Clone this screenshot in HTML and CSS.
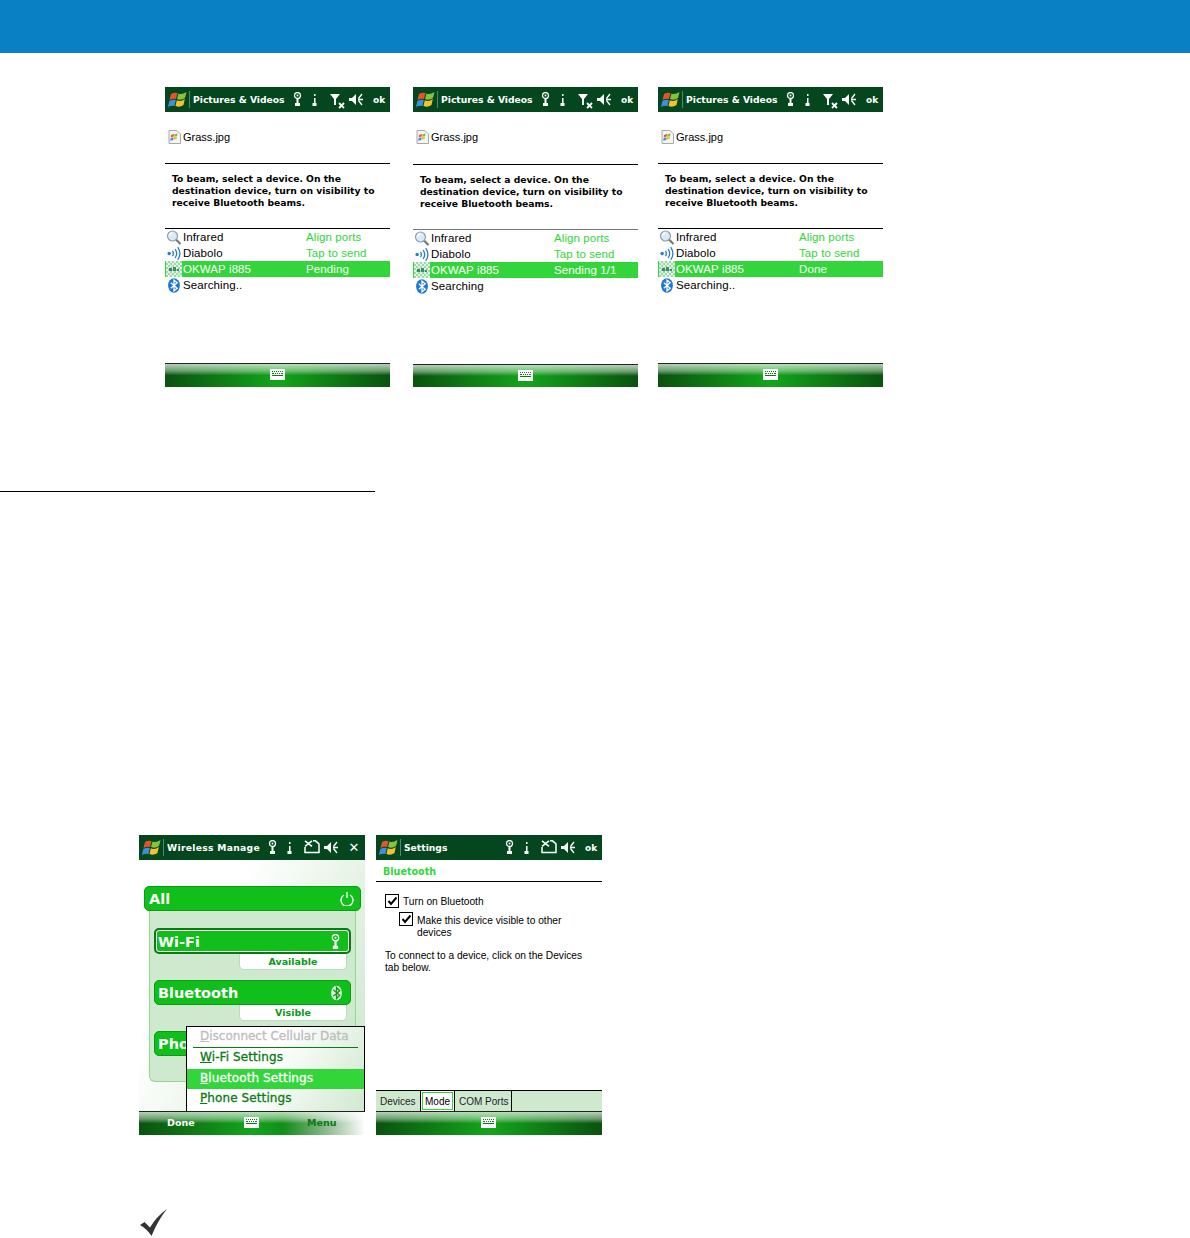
FILE: index.html
```html
<!DOCTYPE html>
<html lang="en">
<head>
<meta charset="utf-8">
<title>Bluetooth beam screens</title>
<link rel="stylesheet" href="styles.css">
</head>
<body>
<svg class="sprite" xmlns="http://www.w3.org/2000/svg">
  <symbol id="flag" viewBox="0 0 19 17">
    <path d="M3 3Q6 1 9.500 2L8 8Q5 7 1.500 9Z" fill="#e8512a"/>
    <path d="M10.500 2.500Q14 4 18.500 1L17 7Q13 10 9 8Z" fill="#86c440"/>
    <path d="M1.300 10Q5 8 7.800 9L6.500 15Q3.500 14 0 16Z" fill="#3d8fe0"/>
    <path d="M8.800 9.300Q13 11 16.800 8L15.500 14Q11.500 17 7.500 15Z" fill="#f5c22e"/>
  </symbol>
  <symbol id="wifi" viewBox="0 0 9 15">
    <circle cx="4.500" cy="3.500" r="3" fill="none" stroke="#fff" stroke-width="1.300"/>
    <path d="M3.500 7h2v4h-2zM2 11h5v3H2z" fill="#fff"/>
    <circle cx="4.500" cy="3.500" r="1" fill="#fff"/>
  </symbol>
  <symbol id="ant" viewBox="0 0 5 15">
    <path d="M2 2h1.500v2H2zM2 6h1.500v5H2zM0.500 11h4v3h-4z" fill="#fff"/>
  </symbol>
  <symbol id="signal" viewBox="0 0 15 16">
    <path d="M0 1h10L6 6v6H4V6Z" fill="#fff"/>
    <path d="M9 10l5 5M14 10l-5 5" stroke="#fff" stroke-width="1.800"/>
  </symbol>
  <symbol id="sync" viewBox="0 0 16 14">
    <path d="M1 7v5.500h14V3.500" fill="none" stroke="#fff" stroke-width="1.500"/>
    <path d="M1 0.800l7 5.500M8 0.800l-7 5.500M9 0.800h2.500l3.500 3" fill="none" stroke="#fff" stroke-width="1.600"/>
  </symbol>
  <symbol id="spk" viewBox="0 0 15 13">
    <path d="M0 5h3l4-4v11L3 8H0Z" fill="#fff"/>
    <path d="M13 1L9.500 5.500M9 6.500h5M13 12L9.500 7.500" stroke="#fff" stroke-width="1.300" fill="none"/>
  </symbol>
  <symbol id="kbd" viewBox="0 0 15 11">
    <path d="M0 0h15v11H0z" fill="#fff"/>
    <path d="M2 2h1v1H2zM4 2h1v1H4zM6 2h1v1H6zM8 2h1v1H8zM10 2h1v1h-1zM12 2h1v1h-1zM2 4h2v1H2zM5 4h1v1H5zM7 4h1v1H7zM9 4h1v1H9zM11 4h2v1h-2zM2 6h11v1H2z" fill="#0a7a12"/>
  </symbol>
  <symbol id="file" viewBox="0 0 13 14">
    <path d="M1 .5h8l3.500 3.500v9.500H1z" fill="#f4f4f4" stroke="#a8a8a8"/>
    <path d="M3 5l3-1-.3 2.500-3 .7z" fill="#e8512a"/>
    <path d="M6.500 4.300l3-.8-.3 2.600-3 .6z" fill="#7fbf3a"/>
    <path d="M2.600 8l3-.8L5.300 10l-3 .7z" fill="#3d8fe0"/>
    <path d="M6 7l3-.7-.3 2.700-3 .8z" fill="#f5c22e"/>
  </symbol>
  <symbol id="mag" viewBox="0 0 15 15">
    <path d="M9.500 9.500l4.500 4.500" stroke="#777" stroke-width="2.200"/>
    <circle cx="6" cy="6" r="5" fill="#dce9f6" stroke="#8a9fb5" stroke-width="1.200"/>
    <path d="M3 6a3 3 0 0 1 3-3" stroke="#fff" stroke-width="1.300" fill="none"/>
  </symbol>
  <symbol id="ir" viewBox="0 0 13 14">
    <circle cx="2" cy="7" r="1.600" fill="#2a7ad0"/>
    <path d="M5 4.500q2 2.500 0 5M7.500 3q3 4 0 8M10 1q4 6 0 12" fill="none" stroke="#2a7ad0" stroke-width="1.200"/>
    <path d="M5 7h1" stroke="#7ab0e8"/>
  </symbol>
  <symbol id="dev" viewBox="0 0 16 16">
    <path d="M0 0h16v16H0z" fill="#9fd8a8"/>
    <path d="M0 0h2v2H0zM4 0h2v2H4zM8 0h2v2H8zM12 0h2v2h-2zM2 2h2v2H2zM6 2h2v2H6zM10 2h2v2h-2zM14 2h2v2h-2zM0 4h2v2H0zM4 4h2v2H4zM8 4h2v2H8zM12 4h2v2h-2zM2 6h2v2H2zM6 6h2v2H6zM10 6h2v2h-2zM14 6h2v2h-2zM0 8h2v2H0zM4 8h2v2H4zM8 8h2v2H8zM12 8h2v2h-2zM2 10h2v2H2zM6 10h2v2H6zM10 10h2v2h-2zM14 10h2v2h-2zM0 12h2v2H0zM4 12h2v2H4zM8 12h2v2H8zM12 12h2v2h-2zM2 14h2v2H2zM6 14h2v2H6zM10 14h2v2h-2zM14 14h2v2h-2z" fill="#e4f4e4"/>
    <path d="M3 7h3v3H3zM7 6h3v4H7zM11 8h2v2h-2z" fill="#3a8a70"/>
  </symbol>
  <symbol id="bt" viewBox="0 0 12 14">
    <ellipse cx="6" cy="7" rx="5.500" ry="6.800" fill="#1a76d8"/>
    <path d="M3 4.500l6 5-3 2.500V2l3 2.500-6 5" fill="none" stroke="#fff" stroke-width="1.200"/>
  </symbol>
  <symbol id="btw" viewBox="0 0 12 16">
    <ellipse cx="6" cy="8" rx="5.800" ry="8" fill="#eaf6ea"/>
    <path d="M2.500 4.500l7 6-3.500 3.500V2l3.500 3.500-7 6" fill="none" stroke="#0a9a14" stroke-width="1.500"/>
  </symbol>
  <symbol id="power" viewBox="0 0 14 14">
    <path d="M4 3A6 6 0 1 0 10 3" fill="none" stroke="#fff" stroke-width="1.400"/>
    <path d="M7 0v6" stroke="#fff" stroke-width="1.400"/>
  </symbol>
  <symbol id="tick" viewBox="0 0 27 27">
    <path d="M0 16L4.500 13 10 18.500Q16 8 27 0 18 11 11.500 27 7 20 0 16Z" fill="#333"/>
  </symbol>
  <symbol id="chk" viewBox="0 0 11 11">
    <path d="M1.500 5l2.500 3L9.500 1.500" fill="none" stroke="#000" stroke-width="2"/>
  </symbol>
</svg>

<header class="banner"></header>

<section class="row-top">
  <article class="screen">
    <div class="titlebar">
      <svg class="flag"><use href="#flag"/></svg><span class="divider"></span>
      <span class="apptitle">Pictures &amp; Videos</span>
      <div class="status">
        <svg class="i-wifi"><use href="#wifi"/></svg><svg class="i-ant"><use href="#ant"/></svg><svg class="i-sig"><use href="#signal"/></svg><svg class="i-spk"><use href="#spk"/></svg><span class="ok">ok</span>
      </div>
    </div>
    <div class="content">
      <div class="filerow"><svg class="i-file"><use href="#file"/></svg>Grass.jpg</div>
      <p class="beam">To beam, select a device. On the destination device, turn on visibility to receive Bluetooth beams.</p>
      <ul class="devices">
        <li class="dev"><svg class="i-row"><use href="#mag"/></svg><span class="dname">Infrared</span><span class="dstate">Align ports</span></li>
        <li class="dev"><svg class="i-row"><use href="#ir"/></svg><span class="dname">Diabolo</span><span class="dstate">Tap to send</span></li>
        <li class="dev sel"><svg class="i-row"><use href="#dev"/></svg><span class="dname">OKWAP i885</span><span class="dstate">Pending</span></li>
        <li class="dev"><svg class="i-row"><use href="#bt"/></svg><span class="dname">Searching..</span></li>
      </ul>
    </div>
    <div class="softbar"><svg class="i-kbd"><use href="#kbd"/></svg></div>
  </article>

  <article class="screen shifted">
    <div class="titlebar">
      <svg class="flag"><use href="#flag"/></svg><span class="divider"></span>
      <span class="apptitle">Pictures &amp; Videos</span>
      <div class="status">
        <svg class="i-wifi"><use href="#wifi"/></svg><svg class="i-ant"><use href="#ant"/></svg><svg class="i-sig"><use href="#signal"/></svg><svg class="i-spk"><use href="#spk"/></svg><span class="ok">ok</span>
      </div>
    </div>
    <div class="content">
      <div class="filerow"><svg class="i-file"><use href="#file"/></svg>Grass.jpg</div>
      <p class="beam">To beam, select a device. On the destination device, turn on visibility to receive Bluetooth beams.</p>
      <ul class="devices">
        <li class="dev"><svg class="i-row"><use href="#mag"/></svg><span class="dname">Infrared</span><span class="dstate">Align ports</span></li>
        <li class="dev"><svg class="i-row"><use href="#ir"/></svg><span class="dname">Diabolo</span><span class="dstate">Tap to send</span></li>
        <li class="dev sel"><svg class="i-row"><use href="#dev"/></svg><span class="dname">OKWAP i885</span><span class="dstate">Sending 1/1</span></li>
        <li class="dev"><svg class="i-row"><use href="#bt"/></svg><span class="dname">Searching</span></li>
      </ul>
    </div>
    <div class="softbar"><svg class="i-kbd"><use href="#kbd"/></svg></div>
  </article>

  <article class="screen">
    <div class="titlebar">
      <svg class="flag"><use href="#flag"/></svg><span class="divider"></span>
      <span class="apptitle">Pictures &amp; Videos</span>
      <div class="status">
        <svg class="i-wifi"><use href="#wifi"/></svg><svg class="i-ant"><use href="#ant"/></svg><svg class="i-sig"><use href="#signal"/></svg><svg class="i-spk"><use href="#spk"/></svg><span class="ok">ok</span>
      </div>
    </div>
    <div class="content">
      <div class="filerow"><svg class="i-file"><use href="#file"/></svg>Grass.jpg</div>
      <p class="beam">To beam, select a device. On the destination device, turn on visibility to receive Bluetooth beams.</p>
      <ul class="devices">
        <li class="dev"><svg class="i-row"><use href="#mag"/></svg><span class="dname">Infrared</span><span class="dstate">Align ports</span></li>
        <li class="dev"><svg class="i-row"><use href="#ir"/></svg><span class="dname">Diabolo</span><span class="dstate">Tap to send</span></li>
        <li class="dev sel"><svg class="i-row"><use href="#dev"/></svg><span class="dname">OKWAP i885</span><span class="dstate">Done</span></li>
        <li class="dev"><svg class="i-row"><use href="#bt"/></svg><span class="dname">Searching..</span></li>
      </ul>
    </div>
    <div class="softbar"><svg class="i-kbd"><use href="#kbd"/></svg></div>
  </article>
</section>

<hr class="section-rule">

<section class="row-bottom">
  <article class="screen wide wm">
    <div class="titlebar">
      <svg class="flag"><use href="#flag"/></svg><span class="divider"></span>
      <span class="apptitle clip">Wireless Manager</span>
      <div class="status">
        <svg class="i-wifi"><use href="#wifi"/></svg><svg class="i-ant"><use href="#ant"/></svg><svg class="i-sync"><use href="#sync"/></svg><svg class="i-spk"><use href="#spk"/></svg><span class="ok close">✕</span>
      </div>
    </div>
    <div class="wm-body">
      <div class="bigbar allbar"><span>All</span><svg class="i-power"><use href="#power"/></svg></div>
      <div class="wm-panel">
        <div class="bigbar focus"><span>Wi-Fi</span><svg class="i-bar"><use href="#wifi"/></svg></div>
        <div class="pill">Available</div>
        <div class="bigbar gap"><span>Bluetooth</span><svg class="i-bar"><use href="#btw"/></svg></div>
        <div class="pill">Visible</div>
        <div class="bigbar gap phone"><span>Pho</span></div>
      </div>
      <div class="menu">
        <div class="mi off"><u>D</u>isconnect Cellular Data</div>
        <div class="msep"></div>
        <div class="mi"><u>W</u>i-Fi Settings</div>
        <div class="mi on"><u>B</u>luetooth Settings</div>
        <div class="mi"><u>P</u>hone Settings</div>
      </div>
    </div>
    <div class="softbar actions">
      <span class="sk-left">Done</span>
      <svg class="i-kbd"><use href="#kbd"/></svg>
      <span class="sk-right">Menu</span>
    </div>
  </article>

  <article class="screen wide">
    <div class="titlebar">
      <svg class="flag"><use href="#flag"/></svg><span class="divider"></span>
      <span class="apptitle">Settings</span>
      <div class="status">
        <svg class="i-wifi"><use href="#wifi"/></svg><svg class="i-ant"><use href="#ant"/></svg><svg class="i-sync"><use href="#sync"/></svg><svg class="i-spk"><use href="#spk"/></svg><span class="ok">ok</span>
      </div>
    </div>
    <div class="set-body">
      <h2 class="set-head">Bluetooth</h2>
      <div class="set-main">
        <label class="chk"><span class="box"><svg class="i-chk"><use href="#chk"/></svg></span><span class="chk-top">Turn on Bluetooth</span></label>
        <label class="chk sub"><span class="box"><svg class="i-chk"><use href="#chk"/></svg></span><span class="chk-sub">Make this device visible to other devices</span></label>
        <p class="hint">To connect to a device, click on the Devices tab below.</p>
      </div>
    </div>
    <div class="tabs">
      <span class="tab first">Devices</span>
      <span class="tab active"><span class="tab-focus">Mode</span></span>
      <span class="tab last">COM Ports</span>
    </div>
    <div class="softbar"><svg class="i-kbd"><use href="#kbd"/></svg></div>
  </article>
</section>

<div class="note"><svg class="i-tick"><use href="#tick"/></svg></div>
</body>
</html>
```

FILE: styles.css
```css
* { box-sizing: border-box; }
html, body { margin: 0; padding: 0; background: #fff; }
body {
  height: 1238px;
  overflow: hidden;
  font-family: "Liberation Sans", Arial, sans-serif;
  color: #000;
}
.sprite { position: absolute; width: 0; height: 0; }
svg { display: block; flex: none; }

.banner { height: 53px; background: #0a80c4; }

.row-top { display: flex; gap: 23px; padding: 34px 0 0 165px; }
.row-top .screen + .screen + .screen { margin-left: -3px; }
.section-rule {
  width: 375px; height: 1px; margin: 104px 0 0;
  border: 0; background: #000;
}
.row-bottom { display: flex; gap: 11px; padding: 343px 0 0 139px; }

.screen { width: 225px; height: 300px; display: flex; flex-direction: column; background: #fff; }
.screen.wide { width: 226px; }

.titlebar {
  height: 25px; flex: none; display: flex; align-items: center;
  padding: 0 5px 0 3px; background: #04471f; color: #fff;
}
.flag { width: 19px; height: 17px; }
.divider { width: 1px; height: 17px; margin: 0 3px 0 2px; background: #4f8a64; }
.apptitle {
  font: bold 9.200px "DejaVu Sans", sans-serif; white-space: nowrap;
  width: 93px; overflow: hidden;
}
.clip { letter-spacing: .3px; }
.status { margin-left: auto; display: flex; align-items: center; }
.i-wifi { width: 9px; height: 15px; }
.i-ant { width: 5px; height: 15px; margin-left: 10px; }
.i-sig { width: 15px; height: 16px; margin-left: 13px; margin-top: 2px; }
.i-sync { width: 16px; height: 14px; margin-left: 12px; margin-top: -2px; }
.i-spk { width: 15px; height: 13px; margin-left: 4px; }
.ok { width: 12px; margin-left: 9px; font: bold 9px "DejaVu Sans", sans-serif; text-align: center; }
.close { font-size: 13px; font-weight: bold; }

.content { flex: 1; display: flex; flex-direction: column; }
.filerow {
  height: 52px; display: flex; align-items: center; gap: 2px;
  padding: 0 0 2px 3px; border-bottom: 1px solid #000;
  font-size: 11px;
}
.shifted .filerow { height: 53px; padding-bottom: 3px; }
.i-file { width: 13px; height: 14px; }
.beam {
  height: 65px; margin: 0; padding: 9px 6px 0 7px;
  font: bold 9.230px/12px "DejaVu Sans", sans-serif;
  border-bottom: 1px solid #000;
}
.shifted .beam { border-bottom-color: #777; }
.devices { list-style: none; margin: 0; padding: 0; font-size: 11.500px; letter-spacing: .1px; }
.dev { height: 16px; display: flex; align-items: center; padding-left: 1px; white-space: nowrap; }
.i-row { width: 16px; height: 15px; }
.dev.sel .i-row { height: 16px; }
.dname { margin-left: 1px; width: 123px; }
.dstate { color: #33d63a; }
.dev.sel { background: #33d63a; color: #fff; }
.dev.sel .dstate { color: #fff; }

.softbar {
  height: 24px; flex: none; position: relative;
  display: flex; align-items: center; justify-content: center;
  border-top: 1px solid #222;
  background:
    linear-gradient(to bottom, rgba(225,240,225,.8) 0, rgba(200,225,200,.5) 30%, rgba(255,255,255,0) 50%),
    linear-gradient(to right, #0a5210 0, #14a51c 50%, #0a5210 100%);
}
.shifted .softbar { height: 23px; }
.i-kbd { width: 15px; height: 11px; margin-top: -2px; }
.wide .i-kbd { margin-left: -2px; }

.wm-body {
  flex: 1; position: relative; padding: 26px 0 0 5px;
  background: linear-gradient(120deg, #fff 30%, #cfe9cf 90%);
}
.bigbar {
  height: 26px; display: flex; align-items: center; justify-content: space-between;
  padding: 1px 8px 0 3px; background: #10bf19; color: #fff;
  border: 1px solid #0d9a14; border-radius: 5px;
  font: bold 14.500px "DejaVu Sans", sans-serif;
}
.allbar { width: 217px; height: 25px; padding: 1px 6px 0 4px; }
.i-power { width: 14px; height: 14px; }
.i-bar { width: 11px; height: 16px; }
.wm-panel {
  width: 207px; height: 171px; margin-left: 5px; padding: 17px 4px 0 4px;
  background: #cfe9cf; border: 1px solid #8fd98f; border-top: 0;
  border-radius: 0 0 6px 6px;
}
.focus {
  box-shadow: inset 0 0 0 1px #fff;
  border: 2px solid #0a7a12;
  padding-left: 2px;
}
.gap { margin-top: 10px; height: 25px; }
.pill {
  width: 108px; height: 16px; margin-left: 85px;
  background: #fff; border: 1px solid #b9dcb9; border-top: 0;
  border-radius: 0 0 5px 5px; text-align: center;
  font: bold 9.500px/16px "DejaVu Sans", sans-serif; color: #0a9a14;
}
.menu {
  position: absolute; left: 47px; top: 166px; width: 179px; height: 86px;
  background: linear-gradient(120deg, #fff 45%, #cfe9cf 100%);
  border: 1px solid #000; border-bottom: 0;
  padding-top: 2px;
  font: 12px "DejaVu Sans", sans-serif; color: #0a7a12;
}
.mi { height: 20.500px; line-height: 19px; padding-left: 13px; white-space: nowrap; letter-spacing: .1px; -webkit-text-stroke: .3px currentColor; }
.mi.off { color: #bdbdbd; height: 17px; line-height: 15px; letter-spacing: 0; }
.msep { height: 1px; margin: 1px 6px 0; background: #0a7a12; }
.mi.on { background: #33d63a; color: #fff; }
.actions { font: bold 9.500px "DejaVu Sans", sans-serif; color: #fff; }
.actions::after {
  content: ""; position: absolute; top: 0; right: 0; bottom: 0; width: 82px;
  background: linear-gradient(to right, rgba(255,255,255,0), #fff);
}
.sk-left { position: absolute; left: 28px; top: 5px; }
.sk-right { position: absolute; left: 168px; top: 5px; color: #0a7a12; z-index: 1; }

.set-body { flex: 1; display: flex; flex-direction: column; font-size: 10.200px; }
.set-head {
  height: 22px; margin: 0; padding: 0 0 0 7px;
  font: bold 9.600px/23px "DejaVu Sans", sans-serif; color: #33d63a;
  border-bottom: 1px solid #000;
}
.set-main { padding: 12px 10px 0 9px; }
.chk { display: flex; gap: 4px; line-height: 12px; align-items: flex-start; }
.chk.sub { margin: 4px 0 0 14px; }
.box {
  width: 14px; height: 14px; flex: none; border: 1px solid #000;
  display: flex; align-items: center; justify-content: center;
}
.chk-top { line-height: 16px; height: 14px; }
.chk-sub { padding-top: 3px; }
.i-chk { width: 11px; height: 11px; }
.hint { margin: 11px 0 0; line-height: 12px; }

.tabs {
  height: 21px; flex: none; display: flex; background: #cfe9cf;
  border-top: 1px solid #000; font-size: 10px; color: #222;
}
.tab { padding: 5px 0 0 4px; width: 45px; border-right: 1px solid #000; white-space: nowrap; }
.tab.active { width: 34px; padding: 0; background: #fff; }
.tab-focus {
  display: block; margin: 1px 0 0 1px; width: 31px; height: 18px;
  border: 1px solid #33d63a; padding: 3px 0 0 2px; color: #000;
}
.tab.last { width: 57px; }

.note { padding: 74px 0 0 140px; }
.i-tick { width: 27px; height: 27px; }
```
